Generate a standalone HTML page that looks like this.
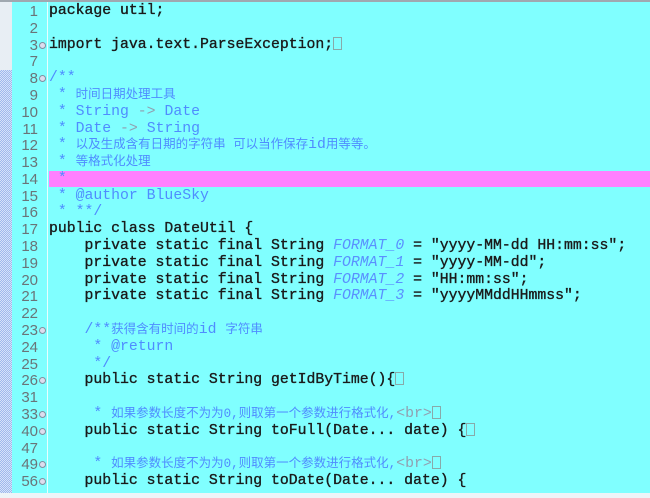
<!DOCTYPE html>
<html><head><style>
body{margin:0;width:650px;height:498px;overflow:hidden;background:#80ffff;position:relative;font-family:"Liberation Mono",monospace}
.g{position:absolute;left:0;top:0;width:12px;height:498px;background:#e8eef4}
.g2{position:absolute;left:0;top:70px;width:12px;height:428px;background:repeating-conic-gradient(#9fb8ec 0 25%,#d6e2fa 0 50%) 0 0/2px 2px}
.sep{position:absolute;left:47px;top:0;width:1px;height:498px;background:#e8ffff}
.top{position:absolute;left:0;top:0;width:650px;height:2px;background:#a0a8b0}
.bot{position:absolute;left:0;top:493px;width:650px;height:5px;background:#eef4f8}
.l{position:absolute;left:0;height:17px;width:650px;line-height:17px;white-space:pre}
.n{position:absolute;right:612px;width:30px;text-align:right;color:#6a7478;font-size:15px;font-family:"Liberation Sans",sans-serif}
.c{position:absolute;left:49px;font-size:14.8px;font-weight:normal;color:#1a1a1a;-webkit-text-stroke:0.35px #1a1a1a}
.cm{color:#4f8cff;-webkit-text-stroke:0}
.cj{font-family:"Liberation Mono","Noto Sans CJK SC",monospace;font-size:12.5px;color:#4f8cff}
.it{color:#5a90ff;font-style:italic;-webkit-text-stroke:0}
.gr{color:#90a0b0;-webkit-text-stroke:0}
.m{position:absolute;left:39px;top:5px;width:7px;height:7px;border-radius:50%;border:1px solid #8090a0;background:#dde;box-sizing:border-box}
.bx{display:inline-block;width:9px;height:13px;border:1px solid #8aa;vertical-align:-2px;box-sizing:border-box;-webkit-text-stroke:0}
.hl{position:absolute;left:49px;top:171px;width:601px;height:16px;background:#ff80ff}
</style></head><body>
<div class="g"></div><div class="g2"></div><div class="sep"></div><div class="top"></div>
<div class="hl"></div>
<div class="l" style="top:3px"><span class="n">1</span><span class="c">package util;</span></div>
<div class="l" style="top:20px"><span class="n">2</span></div>
<div class="l" style="top:37px"><span class="n">3</span><span class="m"></span><span class="c">import java.text.ParseException;<span class="bx"></span></span></div>
<div class="l" style="top:53px"><span class="n">7</span></div>
<div class="l" style="top:70px"><span class="n">8</span><span class="m"></span><span class="c cm">/**</span></div>
<div class="l" style="top:87px"><span class="n">9</span><span class="c cm"> * <span class="cj">时间日期处理工具</span></span></div>
<div class="l" style="top:104px"><span class="n">10</span><span class="c cm"> * String <span class="gr">-&gt;</span> Date</span></div>
<div class="l" style="top:121px"><span class="n">11</span><span class="c cm"> * Date <span class="gr">-&gt;</span> String</span></div>
<div class="l" style="top:137px"><span class="n">12</span><span class="c cm"> * <span class="cj">以及生成含有日期的字符串 可以当作保存</span>id<span class="cj">用等等。</span></span></div>
<div class="l" style="top:154px"><span class="n">13</span><span class="c cm"> * <span class="cj">等格式化处理</span></span></div>
<div class="l" style="top:171px"><span class="n">14</span><span class="c cm"> *</span></div>
<div class="l" style="top:188px"><span class="n">15</span><span class="c cm"> * @author BlueSky</span></div>
<div class="l" style="top:204px"><span class="n">16</span><span class="c cm"> * **/</span></div>
<div class="l" style="top:221px"><span class="n">17</span><span class="c">public class DateUtil {</span></div>
<div class="l" style="top:238px"><span class="n">18</span><span class="c">    private static final String <span class="it">FORMAT_0</span> = "yyyy-MM-dd HH:mm:ss";</span></div>
<div class="l" style="top:255px"><span class="n">19</span><span class="c">    private static final String <span class="it">FORMAT_1</span> = "yyyy-MM-dd";</span></div>
<div class="l" style="top:272px"><span class="n">20</span><span class="c">    private static final String <span class="it">FORMAT_2</span> = "HH:mm:ss";</span></div>
<div class="l" style="top:288px"><span class="n">21</span><span class="c">    private static final String <span class="it">FORMAT_3</span> = "yyyyMMddHHmmss";</span></div>
<div class="l" style="top:305px"><span class="n">22</span></div>
<div class="l" style="top:322px"><span class="n">23</span><span class="m"></span><span class="c cm">    /**<span class="cj">获得含有时间的</span>id <span class="cj">字符串</span></span></div>
<div class="l" style="top:339px"><span class="n">24</span><span class="c cm">     * @return</span></div>
<div class="l" style="top:356px"><span class="n">25</span><span class="c cm">     */</span></div>
<div class="l" style="top:372px"><span class="n">26</span><span class="m"></span><span class="c">    public static String getIdByTime(){<span class="bx"></span></span></div>
<div class="l" style="top:389px"><span class="n">31</span></div>
<div class="l" style="top:406px"><span class="n">33</span><span class="m"></span><span class="c cm">     * <span class="cj">如果参数长度不为为0,则取第一个参数进行格式化,</span><span class="gr">&lt;br&gt;</span><span class="bx"></span></span></div>
<div class="l" style="top:423px"><span class="n">40</span><span class="m"></span><span class="c">    public static String toFull(Date... date) {<span class="bx"></span></span></div>
<div class="l" style="top:440px"><span class="n">47</span></div>
<div class="l" style="top:456px"><span class="n">49</span><span class="m"></span><span class="c cm">     * <span class="cj">如果参数长度不为为0,则取第一个参数进行格式化,</span><span class="gr">&lt;br&gt;</span><span class="bx"></span></span></div>
<div class="l" style="top:473px"><span class="n">56</span><span class="m"></span><span class="c">    public static String toDate(Date... date) {</span></div>
<div class="bot"></div>
</body></html>
